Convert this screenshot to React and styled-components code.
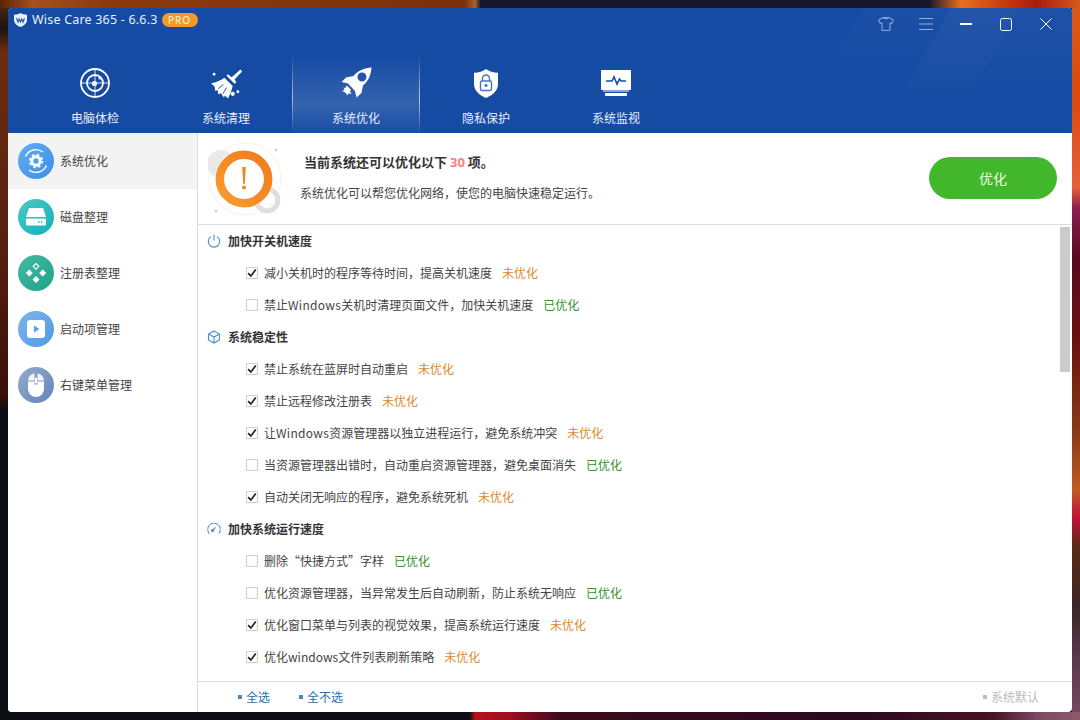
import React from "react";
import styled, { createGlobalStyle } from "styled-components";

const Global = createGlobalStyle`
  html, body { margin: 0; height: 100%; }
  body {
    width: 1080px; height: 720px; overflow: hidden; box-sizing: border-box; padding: 8px;
    font-family: "Noto Sans CJK SC", "Noto Sans", sans-serif;
    background-color: #0c0e14;
    background-repeat: no-repeat;
    background-image:
      linear-gradient(90deg, #5a2208 0, #a8501c 3%, #8c3a0c 10%, #7c3008 43%, #a8602c 44%, #17162a 44.5%, #17162a 86%, #e8701c 89%, #c83a10 93%, #a81c0c 96%, #d85a20 100%),
      linear-gradient(90deg, #0c0e14 0, #0c0e14 43.5%, #b8101c 44%, #a01020 47%, #3a0a1c 52%, #2a0a1c 80%, #4a1226 92%, #7a4a60 96%, #8a5a6c 100%),
      linear-gradient(180deg, #5a2a10 0, #1a1216 4%, #6a2c10 7%, #5a2410 30%, #3a0f08 55%, #0c0e14 57%, #0c0e14 100%),
      linear-gradient(180deg, #d85a18 0, #d84a10 14%, #e8603a 26%, #8c1c50 29%, #5a0a20 36%, #6b1010 47%, #8a3a15 60%, #c05a20 68%, #c0103a 72%, #5a2a15 76%, #3a2525 84%, #5a3a50 92%, #7a4a60 100%);
    background-size: 100% 8px, 100% 8px, 8px 100%, 8px 100%;
    background-position: top left, bottom left, top left, top right;
  }
  #root { height: 704px; }
`;

const Window = styled.div`
  width: 1064px; height: 704px; display: flex; flex-direction: column;
  background: #fff; border-radius: 4px; overflow: hidden; color: #444; font-size: 12px;
`;
const TitleBar = styled.header`
  height: 125px; flex: none; display: flex; flex-direction: column;
  background-color: #164ba3;
  background-image:
    linear-gradient(180deg, rgba(22,75,163,0) 0, #164ba3 100px),
    linear-gradient(120deg, transparent 740px, rgba(255,255,255,.02) 740px, rgba(255,255,255,.02) 817px, rgba(255,255,255,.06) 817px, rgba(255,255,255,.06) 876px, rgba(255,255,255,.035) 876px);
`;
const TopRow = styled.div`
  height: 47px; display: flex; align-items: flex-start; padding: 0 6px; flex: none;
`;
const Brand = styled.div`height: 24px; display: flex; align-items: center;`;
const Logo = styled.svg`width: 13px; height: 14px; margin-right: 5px;`;
const AppName = styled.span`
  font: 12.5px/16px "Noto Sans", sans-serif; color: #e8effa; letter-spacing: .2px; white-space: nowrap;
`;
const ProBadge = styled.span`
  margin-left: 4px; width: 36px; height: 14px; border-radius: 7px; background: #f39a2b; color: #fff3df;
  font: 10px/14px "Noto Sans", sans-serif; letter-spacing: 1.1px; text-align: center;
`;
const Controls = styled.div`margin-left: auto; display: flex;`;
const Control = styled.button`
  width: 40px; height: 32px; padding: 0; border: 0; background: none; display: flex; align-items: center; justify-content: center;
  color: #fff; opacity: ${p => (p.$dim ? 0.55 : 1)};
`;
const Tabs = styled.nav`display: flex; padding-left: 23px; flex: 1;`;
const Tab = styled.div`
  width: 130px; height: 78px; position: relative; display: flex; flex-direction: column; align-items: center; color: #e6eefb;
  box-sizing: border-box; padding-top: 12px;
  &:first-child { padding-right: 2px; }
  ${p => p.$active && `
    background: linear-gradient(180deg, rgba(255,255,255,0) 0, rgba(255,255,255,.13) 62%, rgba(255,255,255,.02) 100%);
    background-size: 127px 100%;
    background-position: 2px 0;
    background-repeat: no-repeat;
    &::before, &::after {
      content: ""; position: absolute; top: 0; bottom: 0; width: 1px;
      background: linear-gradient(180deg, rgba(255,255,255,0), rgba(255,255,255,.65) 55%, rgba(255,255,255,0));
    }
    &::before { left: 1px; }
    &::after { right: 1px; }
  `}
`;
const TabIcon = styled.div`height: 32px; display: flex; align-items: center; justify-content: center;`;
const TabLabel = styled.span`margin-top: ${p => (p.$low ? 10 : 9.5)}px; font-size: 12px; line-height: 18px;`;

const Body = styled.div`flex: 1; display: flex; min-height: 0;`;
const Sidebar = styled.aside`width: 190px; flex: none; box-sizing: border-box; border-right: 1px solid #dcdcdc; background: #fff;`;
const SideItem = styled.div`
  height: 56px; display: flex; align-items: center; padding-left: 10px; gap: 6px;
  background: ${p => (p.$active ? "#f3f3f3" : "#fff")};
  color: #444;
`;
const SideIcon = styled.div`
  width: 36px; height: 36px; border-radius: 50%; display: flex; align-items: center; justify-content: center;
  background: linear-gradient(135deg, ${p => p.$from}, ${p => p.$to});
`;
const SideLabel = styled.span`padding-bottom: 2px;`;
const Main = styled.main`flex: 1; min-width: 0; display: flex; flex-direction: column;`;
const Banner = styled.section`
  height: 92px; flex: none; box-sizing: border-box; border-bottom: 1px solid #dcdcdc; display: flex; align-items: center; padding: 0 15px 0 10px;
`;
const BannerText = styled.div`margin-left: 18px; flex: 1; padding-bottom: 3px;`;
const BannerTitle = styled.div`font-size: 13px; line-height: 20px; font-weight: 700; color: #333; padding-left: 4px;`;
const Count = styled.b`color: #f58080; font-family: "Noto Sans", sans-serif; font-weight: 700;`;
const BannerSub = styled.div`font-size: 12px; line-height: 18px; color: #444; margin-top: 12px;`;
const Optimize = styled.button`
  width: 128px; height: 42px; border: 0; border-radius: 21px; background: #43b72c; color: #e9ffe0;
  font: 14px "Noto Sans CJK SC", sans-serif; margin-top: -1px; padding: 0 0 1px;
`;
const ListWrap = styled.div`flex: 1; min-height: 0; display: flex;`;
const Items = styled.div`flex: 1; min-width: 0; overflow: hidden;`;
const Track = styled.div`width: 12px; flex: none; padding-top: 2px; box-sizing: border-box; padding-right: 2px;`;
const Thumb = styled.div`height: 145px; background: #cbcbcb;`;
const Heading = styled.div`
  height: 32px; display: flex; align-items: center; padding-left: 9px; gap: 7px; font-weight: 700; color: #333;
`;
const HeadingText = styled.span`padding-bottom: 2px;`;
const Row = styled.div`height: 32px; display: flex; align-items: center; padding-left: 48px; color: #444; white-space: nowrap;`;
const Check = styled.span`
  width: 12px; height: 12px; box-sizing: border-box; border: 1px solid #cfcfcf; background: #fff; margin-right: 6px; display: flex; align-items: center; justify-content: center; flex: none;
`;
const RowText = styled.span`padding-bottom: 2px;`;
const Latin = styled.span`letter-spacing: .3px;`;
const Status = styled.span`margin-left: 10px; color: ${p => (p.$done ? "#35922a" : "#d98a2e")};`;
const Footer = styled.footer`
  height: 31px; flex: none; box-sizing: border-box; border-top: 1px solid #dcdcdc; display: flex; align-items: center; padding: 0 33px 2px 40px; gap: 29px;
`;
const FootLink = styled.span`
  display: flex; align-items: center; gap: 4px; color: ${p => (p.$muted ? "#bcbcbc" : "#2f6f9f")};
  &::before { content: ""; width: 4px; height: 4px; margin-top: 1px; background: ${p => (p.$muted ? "#bcbcbc" : "#4f8ab5")}; }
  ${p => p.$end && "margin-left: auto;"}
`;

const Radar = () => (
  <svg width="32" height="32" viewBox="0 0 32 32" fill="none" stroke="#fff">
    <circle cx="16" cy="16" r="14" strokeWidth="1.800" />
    <circle cx="16" cy="16" r="8" strokeWidth="1.800" />
    <path d="M16 2v28M2 16h28" strokeWidth="1" opacity=".85" />
    <circle cx="15.500" cy="16.500" r="2.600" fill="#fff" stroke="none" />
    <circle cx="21" cy="11" r="1.600" fill="#fff" stroke="none" />
  </svg>
);
const Broom = () => (
  <svg width="31" height="31" viewBox="0 0 30 30" fill="#fff">
    <path d="M28.500 1.500l1.500 2-8.500 9-2.500-2.500z" />
    <path d="M15 7.500l1.500-1.500 8 7-1.500 2.500z" />
    <path d="M13 9.500l8 8c-1 5-3 8.500-4.500 12l-3-3-1 2-3-4-2.500 1-.5-4-2.500.5-.5-4L0 15c5-1 9-2.500 13-5.500z" />
    <path d="M12 16l-5 4M15 19l-3.500 6" stroke="#164ba3" strokeWidth=".9" fill="none" />
    <circle cx="21" cy="25" r="2" /><circle cx="26" cy="23" r="1.400" />
    <circle cx="3" cy="6" r="1.300" />
  </svg>
);
const Rocket = () => (
  <svg width="32" height="32" viewBox="0 0 32 32" fill="#fff">
    <path fillRule="evenodd" d="M31.500 .5c-7.500 .5-13.500 3-18 8.500L6 10.500 1.500 15l6.500 1.500 7 7.500 1.500 6.500 5-4.500 1.500-7.500C28.500 14 31 8 31.500 .5zM22 5.500a4.500 4.500 0 1 1 0 9a4.500 4.500 0 0 1 0-9z" />
    <path d="M6.500 18.500l2.500 2 2 2.500-1 1.500 1.500 2.500-3-.5-1.500 2-1-2.500L2 24l2.500-1-1-2.500 2 .5z" />
  </svg>
);
const ShieldLock = () => (
  <svg width="24" height="29" viewBox="0 0 24 29">
    <path fill="#fff" d="M12 0c3 2.500 7 3.500 12 3.800V15c0 6.500-5 11-12 14C5 26 0 21.500 0 15V3.800C5 3.500 9 2.500 12 0z" />
    <rect x="6.500" y="12" width="11" height="9.500" rx="1.500" fill="none" stroke="#4d74b8" strokeWidth="1.400" />
    <path d="M8.500 12V9.500a3.500 3.500 0 0 1 7 0V12" fill="none" stroke="#4d74b8" strokeWidth="1.400" />
    <circle cx="12" cy="16.500" r="1.600" fill="#4d74b8" />
  </svg>
);
const Monitor = () => (
  <svg width="30" height="26" viewBox="0 0 30 26">
    <rect width="30" height="20" fill="#fff" />
    <path d="M2 21.500h26v-1H2z" fill="#fff" />
    <path d="M4 23h22v3H4z" fill="#fff" />
    <path d="M5 11h6l2-4 3 7 2.500-5 1.500 2h5" fill="none" stroke="#164ba3" strokeWidth="1.600" />
  </svg>
);
const Power = () => (
  <svg width="14" height="14" viewBox="0 0 14 14" fill="none" stroke="#4a90d0" strokeWidth="1.100">
    <path d="M4 2.600a5.700 5.700 0 1 0 6 0" /><path d="M7 .8v5.600" />
  </svg>
);
const Cube = () => (
  <svg width="14" height="14" viewBox="0 0 14 14" fill="none" stroke="#4a90d0" strokeWidth="1.100">
    <path d="M7 1l5.500 3v6L7 13l-5.500-3V4zM1.500 4L7 7l5.500-3M7 7v6" />
  </svg>
);
const Gauge = () => (
  <svg width="14" height="14" viewBox="0 0 14 14" fill="none" stroke="#4a90d0" strokeWidth="1.100">
    <path d="M2.300 11.700A6.300 6.300 0 1 1 11.700 11.700" strokeDasharray="4 .8" /><path d="M5.500 8.500l3-3" /><circle cx="5.500" cy="8.500" r="1" fill="#4a90d0" />
  </svg>
);
const Tick = () => (
  <svg width="10" height="10" viewBox="0 0 10 10" fill="none" stroke="#222" strokeWidth="1.700"><path d="M1.200 5.200l2.600 2.800L8.800 1.500" /></svg>
);
const GearIcon = () => (
  <svg width="28" height="28" viewBox="0 0 28 28" fill="none" stroke="#fff">
    <path d="M3.500 9.500A11.500 11.500 0 0 1 21 5M24.500 18.500A11.500 11.500 0 0 1 7 23" strokeWidth="1.400" />
    <circle cx="14" cy="14" r="6.300" strokeWidth="1.800" strokeDasharray="2.500 2.450" />
    <circle cx="14" cy="14" r="4.200" strokeWidth="3" />
  </svg>
);
const DriveIcon = () => (
  <svg width="22" height="20" viewBox="0 0 22 20">
    <path d="M4 1h14l3 9H1z" fill="#fff" />
    <rect x="1" y="11.500" width="20" height="7" rx="1" fill="#fff" />
    <path d="M13 15h1.500M16 15h1.500" stroke="#18b5bb" strokeWidth="1.400" />
  </svg>
);
const DiamondsIcon = () => (
  <svg width="22" height="22" viewBox="0 0 22 22" fill="#fff">
    <path d="M11 1.500l2.800 2.800L11 7.100 8.200 4.300z" fill="none" stroke="#fff" strokeWidth="1.100" />
    <path d="M4.300 7.500l3.500 3.500-3.500 3.500L.8 11zM17.700 7.500l3.500 3.500-3.500 3.500-3.500-3.500zM11 14l3.500 3.500L11 21l-3.500-3.500z" />
  </svg>
);
const PlayIcon = () => (
  <svg width="18" height="18" viewBox="0 0 18 18">
    <rect width="18" height="18" rx="3" fill="#fff" />
    <path d="M7 5.500l5.500 3.500L7 12.500z" fill="#5aa0e6" />
  </svg>
);
const MouseIcon = () => (
  <svg width="18" height="26" viewBox="0 0 18 26">
    <path d="M1 9.500V17a8 8 0 0 0 16 0V9.500h-6.500v3h-3v-3z" fill="#fff" />
    <path d="M1 8.500A8 8 0 0 1 7.500 1.200v7.300zM10.500 1.500A8 8 0 0 1 17 8.500h-6.500z" fill="#fff" opacity=".9" />
    <rect x="7.800" y="5.500" width="2.400" height="6" rx="1.200" fill="#fff" />
  </svg>
);
const WarnArt = () => (
  <svg width="74" height="74" viewBox="0 0 74 74" style={{ flex: "none" }}>
    <defs>
      <linearGradient id="ring" x1="0" y1="1" x2="1" y2="0">
        <stop offset="0" stopColor="#f99a30" />
        <stop offset="1" stopColor="#f07c1c" />
      </linearGradient>
    </defs>
    <circle cx="37" cy="37" r="36" fill="none" stroke="#fbefe4" strokeWidth="1" />
    <circle cx="13" cy="22" r="14" fill="#e9e9e9" />
    <circle cx="59" cy="58" r="11" fill="none" stroke="#dfdfdf" strokeWidth="5" />
    <circle cx="36" cy="37" r="29" fill="#fff" />
    <circle cx="36" cy="37" r="24.200" fill="none" stroke="url(#ring)" strokeWidth="8.500" />
    <path d="M34.200 25h3.600l-1 17h-1.600z" fill="#f2861f" />
    <circle cx="36" cy="45.500" r="2" fill="#f2861f" />
    <circle cx="68" cy="8" r="1.200" fill="#f5b98a" />
    <circle cx="8" cy="69" r="1.200" fill="#f5b98a" />
  </svg>
);

const tabs = [
  { label: "电脑体检", Icon: Radar },
  { label: "系统清理", Icon: Broom, low: true },
  { label: "系统优化", Icon: Rocket, low: true, active: true },
  { label: "隐私保护", Icon: ShieldLock },
  { label: "系统监视", Icon: Monitor },
];
const side = [
  { label: "系统优化", Icon: GearIcon, from: "#62aef0", to: "#3a8eea", active: true },
  { label: "磁盘整理", Icon: DriveIcon, from: "#4bc8c2", to: "#10b2bc" },
  { label: "注册表整理", Icon: DiamondsIcon, from: "#45b8a4", to: "#1ea488" },
  { label: "启动项管理", Icon: PlayIcon, from: "#7fb5ea", to: "#4e9ae6" },
  { label: "右键菜单管理", Icon: MouseIcon, from: "#92a9cd", to: "#6485b8" },
];
const groups = [
  { title: "加快开关机速度", Icon: Power, rows: [
    ["减小关机时的程序等待时间，提高关机速度", false],
    ["禁止Windows关机时清理页面文件，加快关机速度", true],
  ]},
  { title: "系统稳定性", Icon: Cube, rows: [
    ["禁止系统在蓝屏时自动重启", false],
    ["禁止远程修改注册表", false],
    ["让Windows资源管理器以独立进程运行，避免系统冲突", false],
    ["当资源管理器出错时，自动重启资源管理器，避免桌面消失", true],
    ["自动关闭无响应的程序，避免系统死机", false],
  ]},
  { title: "加快系统运行速度", Icon: Gauge, rows: [
    ["删除“快捷方式”字样", true],
    ["优化资源管理器，当异常发生后自动刷新，防止系统无响应", true],
    ["优化窗口菜单与列表的视觉效果，提高系统运行速度", false],
    ["优化windows文件列表刷新策略", false],
  ]},
];

const withLatin = text =>
  text.split(/(Windows)/).map((part, i) => (part === "Windows" ? <Latin key={i}>{part}</Latin> : part));

export default function App() {
  return (
    <>
      <Global />
      <Window>
        <TitleBar>
          <TopRow>
            <Brand>
              <Logo viewBox="0 0 13 14">
                <path d="M6.500 0c1.800 1 3.800 1.600 6.500 1.700V7c0 3-2.500 5.500-6.500 7C2.500 12.500 0 10 0 7V1.700C2.700 1.600 4.700 1 6.500 0z" fill="#e8f0fb" />
                <path d="M2.500 5l1.500 4 1.200-3 1.300 3 1.300-3 1.200 3 1.500-4" fill="none" stroke="#2a62b8" strokeWidth="1.200" />
              </Logo>
              <AppName>Wise Care 365 - 6.6.3</AppName>
              <ProBadge>PRO</ProBadge>
            </Brand>
            <Controls>
              <Control $dim aria-label="skin">
                <svg width="16" height="14" viewBox="0 0 16 14" fill="none" stroke="currentColor" strokeWidth="1"><path d="M5 .6h6l4.400 2.400-1.400 3.400-2-.6V13.400H4V5.800l-2 .6L.6 3zM5 .6c1 1.600 5 1.600 6 0" /></svg>
              </Control>
              <Control $dim aria-label="menu">
                <svg width="14" height="12" viewBox="0 0 14 12" stroke="currentColor" strokeWidth="1"><path d="M0 .5h14M0 6h14M0 11.500h14" /></svg>
              </Control>
              <Control aria-label="minimize">
                <svg width="14" height="4" viewBox="0 0 14 4" stroke="currentColor" strokeWidth="2"><path d="M1 2h12" /></svg>
              </Control>
              <Control aria-label="maximize">
                <svg width="12" height="13" viewBox="0 0 12 13" fill="none" stroke="currentColor" strokeWidth="1"><rect x=".5" y=".5" width="11" height="12" rx="2" /></svg>
              </Control>
              <Control aria-label="close">
                <svg width="12" height="12" viewBox="0 0 12 12" stroke="currentColor" strokeWidth="1"><path d="M.5 .5l11 11M11.500 .5l-11 11" /></svg>
              </Control>
            </Controls>
          </TopRow>
          <Tabs>
            {tabs.map(({ label, Icon, low, active }) => (
              <Tab key={label} $active={active}>
                <TabIcon><Icon /></TabIcon>
                <TabLabel $low={low}>{label}</TabLabel>
              </Tab>
            ))}
          </Tabs>
        </TitleBar>
        <Body>
          <Sidebar>
            {side.map(({ label, Icon, from, to, active }) => (
              <SideItem key={label} $active={active}>
                <SideIcon $from={from} $to={to}><Icon /></SideIcon>
                <SideLabel>{label}</SideLabel>
              </SideItem>
            ))}
          </Sidebar>
          <Main>
            <Banner>
              <WarnArt />
              <BannerText>
                <BannerTitle>当前系统还可以优化以下 <Count>30</Count> 项。</BannerTitle>
                <BannerSub>系统优化可以帮您优化网络，使您的电脑快速稳定运行。</BannerSub>
              </BannerText>
              <Optimize>优化</Optimize>
            </Banner>
            <ListWrap>
              <Items>
                {groups.map(({ title, Icon, rows }) => (
                  <div key={title}>
                    <Heading><Icon /><HeadingText>{title}</HeadingText></Heading>
                    {rows.map(([text, done]) => (
                      <Row key={text}>
                        <Check>{!done && <Tick />}</Check>
                        <RowText>
                          {withLatin(text)}
                          <Status $done={done}>{done ? "已优化" : "未优化"}</Status>
                        </RowText>
                      </Row>
                    ))}
                  </div>
                ))}
              </Items>
              <Track><Thumb /></Track>
            </ListWrap>
            <Footer>
              <FootLink>全选</FootLink>
              <FootLink>全不选</FootLink>
              <FootLink $muted $end>系统默认</FootLink>
            </Footer>
          </Main>
        </Body>
      </Window>
    </>
  );
}
